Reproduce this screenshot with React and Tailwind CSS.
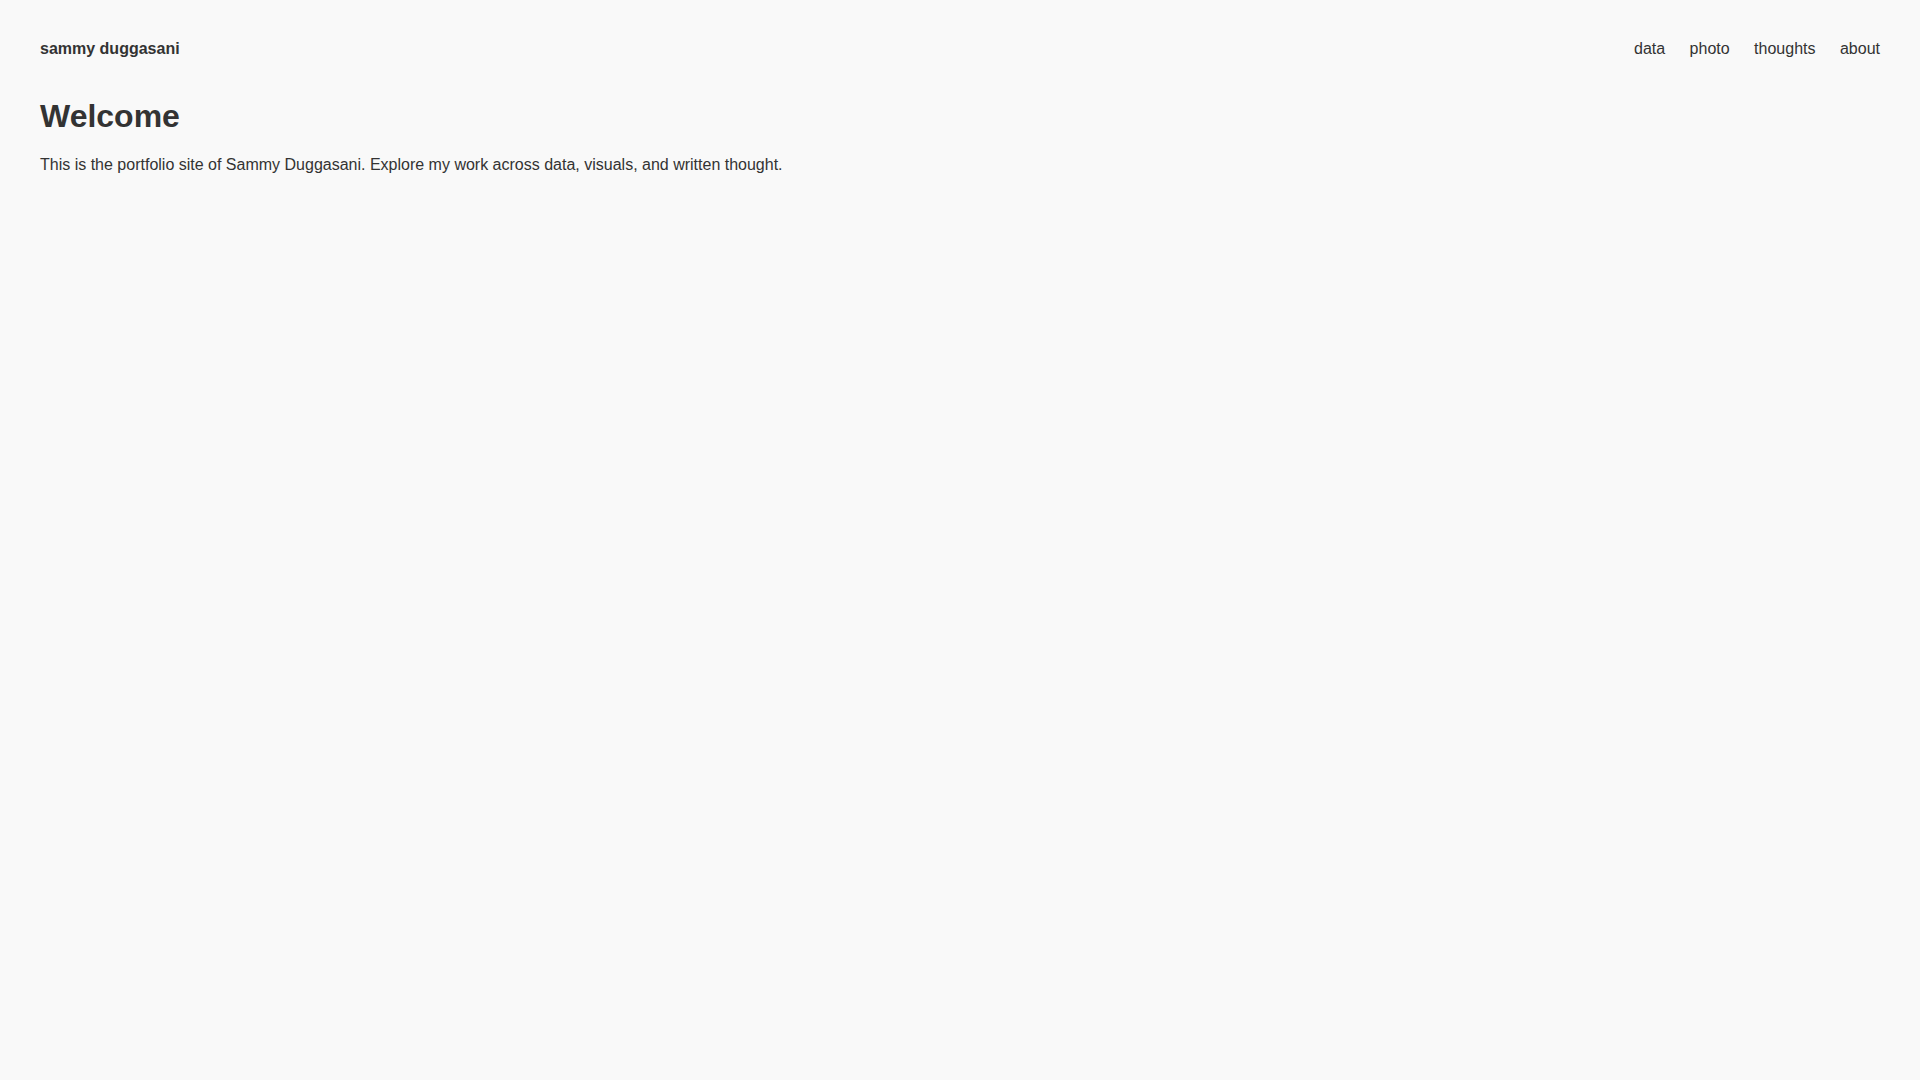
const links = [
  { label: 'data', href: '#data' },
  { label: 'photo', href: '#photo' },
  { label: 'thoughts', href: '#thoughts' },
  { label: 'about', href: '#about' },
]

const Header = () => (
  <header className="flex items-center justify-between mb-10">
    <div className="font-bold">sammy duggasani</div>
    <nav>
      {links.map((link) => (
        <span key={link.label}>
          <a href={link.href} className="ml-5">{link.label}</a>{' '}
        </span>
      ))}
    </nav>
  </header>
)

const App = () => {
  return (
    <div className="min-h-screen p-10 bg-[#f9f9f9] text-[#333] text-base leading-[18px] font-['Helvetica_Neue','Liberation_Sans',Arial,sans-serif]">
      <Header />

      {/* Intro */}
      <main>
        <h1 className="text-[32px] leading-[37px] font-bold mb-[21px]">Welcome</h1>
        <p>This is the portfolio site of Sammy Duggasani. Explore my work across data, visuals, and written thought.</p>
      </main>
    </div>
  )
}

export default App
